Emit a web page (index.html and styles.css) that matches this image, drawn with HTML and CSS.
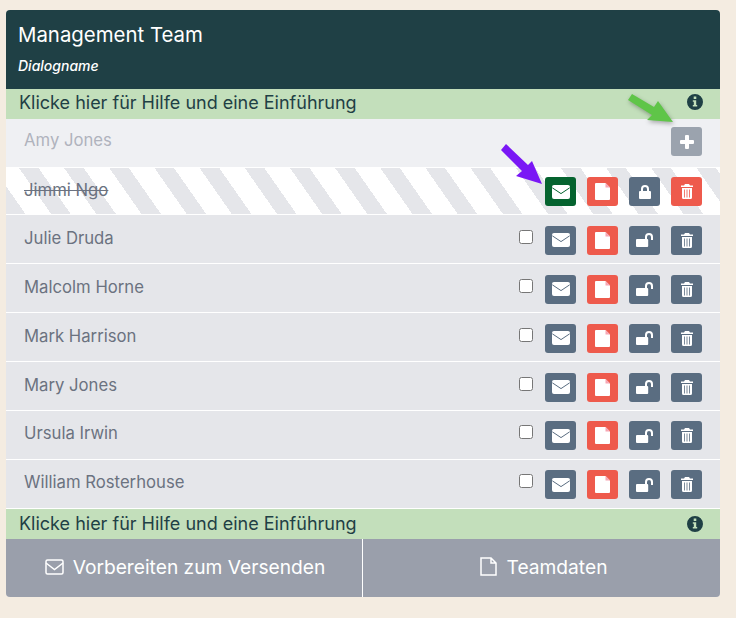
FILE: index.html
```html
<!DOCTYPE html>
<html>
<head>
    <meta charset="utf-8">
    <link rel="stylesheet" href="styles.css">
    <title>Management Team</title>
</head>
<body>
    <svg class="icon-defs" width="0" height="0">
        <symbol id="i-mail" viewBox="0 0 18 14">
            <rect width="18" height="14" rx="2" fill="white"/>
            <path d="M.3 2.800 9 8.600 17.700 2.800" fill="none" stroke="currentColor" stroke-width="1"/>
        </symbol>
        <symbol id="i-file" viewBox="0 0 15 17">
            <path d="M1 0h9.500L15 4.500V16a1 1 0 0 1-1 1H1a1 1 0 0 1-1-1V1a1 1 0 0 1 1-1z" fill="white"/>
            <path d="M10.500 0 15 4.500H10.500z" fill="#f7a6b4"/>
        </symbol>
        <symbol id="i-lock" viewBox="0 0 12 14">
            <path d="M2 6V4a4 4 0 0 1 8 0v2h1a1 1 0 0 1 1 1v6a1 1 0 0 1-1 1H1a1 1 0 0 1-1-1V7a1 1 0 0 1 1-1zm2 0h4V4a2 2 0 0 0-4 0z"/>
        </symbol>
        <symbol id="i-unlock" viewBox="0 0 17 14">
            <path d="M1 6h8V4a4 4 0 0 1 8 0v3h-2V4a2 2 0 0 0-4 0v2h.2a1 1 0 0 1 1 1v6a1 1 0 0 1-1 1H1a1 1 0 0 1-1-1V7a1 1 0 0 1 1-1z"/>
        </symbol>
        <symbol id="i-trash" viewBox="0 0 12 15">
            <path d="M4 0h4l1 1.500h3V3H0V1.500h3zM1 4h10v9.500A1.500 1.500 0 0 1 9.500 15h-7A1.500 1.500 0 0 1 1 13.500zm2 1.600v7.800h.8V5.600zm2.600 0v7.800h.8V5.600zm2.600 0v7.800h.8V5.600z" fill-rule="evenodd"/>
        </symbol>
        <symbol id="i-plus" viewBox="0 0 14 14">
            <path d="M5 1a1 1 0 0 1 1-1h2a1 1 0 0 1 1 1v4h4a1 1 0 0 1 1 1v2a1 1 0 0 1-1 1H9v4a1 1 0 0 1-1 1H6a1 1 0 0 1-1-1V9H1a1 1 0 0 1-1-1V6a1 1 0 0 1 1-1h4z"/>
        </symbol>
        <symbol id="i-info" viewBox="0 0 16 16">
            <path fill-rule="evenodd" d="M8 0a8 8 0 1 1 0 16A8 8 0 0 1 8 0zM6.700 2.600v2.500h2.600V2.600zM5.800 6.300v1.500h1v3.300h-1v1.500h4.400v-1.500h-1V6.300z"/>
        </symbol>
    </svg>

    <div class="card">
        <div class="head">
            <h1>Management Team</h1>
            <p>Dialogname</p>
        </div>

        <div class="help help-top">
            <span>Klicke hier für Hilfe und eine Einführung</span>
            <svg class="info"><use href="#i-info"/></svg>
        </div>

        <div class="row row-add">
            <span class="name">Amy Jones</span>
            <div class="actions">
                <button class="btn btn-add"><svg class="ic-plus"><use href="#i-plus"/></svg></button>
            </div>
        </div>

        <div class="row row-off">
            <span class="name">Jimmi Ngo</span>
            <div class="actions">
                <button class="btn btn-green"><svg class="ic-mail"><use href="#i-mail"/></svg></button>
                <button class="btn btn-red"><svg class="ic-file"><use href="#i-file"/></svg></button>
                <button class="btn"><svg class="ic-lock"><use href="#i-lock"/></svg></button>
                <button class="btn btn-red"><svg class="ic-trash"><use href="#i-trash"/></svg></button>
            </div>
        </div>

        <div class="row">
            <span class="name">Julie Druda</span>
            <div class="actions">
                <input type="checkbox">
                <button class="btn"><svg class="ic-mail"><use href="#i-mail"/></svg></button>
                <button class="btn btn-red"><svg class="ic-file"><use href="#i-file"/></svg></button>
                <button class="btn"><svg class="ic-unlock"><use href="#i-unlock"/></svg></button>
                <button class="btn"><svg class="ic-trash"><use href="#i-trash"/></svg></button>
            </div>
        </div>
        <div class="row">
            <span class="name">Malcolm Horne</span>
            <div class="actions">
                <input type="checkbox">
                <button class="btn"><svg class="ic-mail"><use href="#i-mail"/></svg></button>
                <button class="btn btn-red"><svg class="ic-file"><use href="#i-file"/></svg></button>
                <button class="btn"><svg class="ic-unlock"><use href="#i-unlock"/></svg></button>
                <button class="btn"><svg class="ic-trash"><use href="#i-trash"/></svg></button>
            </div>
        </div>
        <div class="row">
            <span class="name">Mark Harrison</span>
            <div class="actions">
                <input type="checkbox">
                <button class="btn"><svg class="ic-mail"><use href="#i-mail"/></svg></button>
                <button class="btn btn-red"><svg class="ic-file"><use href="#i-file"/></svg></button>
                <button class="btn"><svg class="ic-unlock"><use href="#i-unlock"/></svg></button>
                <button class="btn"><svg class="ic-trash"><use href="#i-trash"/></svg></button>
            </div>
        </div>
        <div class="row">
            <span class="name">Mary Jones</span>
            <div class="actions">
                <input type="checkbox">
                <button class="btn"><svg class="ic-mail"><use href="#i-mail"/></svg></button>
                <button class="btn btn-red"><svg class="ic-file"><use href="#i-file"/></svg></button>
                <button class="btn"><svg class="ic-unlock"><use href="#i-unlock"/></svg></button>
                <button class="btn"><svg class="ic-trash"><use href="#i-trash"/></svg></button>
            </div>
        </div>
        <div class="row">
            <span class="name">Ursula Irwin</span>
            <div class="actions">
                <input type="checkbox">
                <button class="btn"><svg class="ic-mail"><use href="#i-mail"/></svg></button>
                <button class="btn btn-red"><svg class="ic-file"><use href="#i-file"/></svg></button>
                <button class="btn"><svg class="ic-unlock"><use href="#i-unlock"/></svg></button>
                <button class="btn"><svg class="ic-trash"><use href="#i-trash"/></svg></button>
            </div>
        </div>
        <div class="row">
            <span class="name">William Rosterhouse</span>
            <div class="actions">
                <input type="checkbox">
                <button class="btn"><svg class="ic-mail"><use href="#i-mail"/></svg></button>
                <button class="btn btn-red"><svg class="ic-file"><use href="#i-file"/></svg></button>
                <button class="btn"><svg class="ic-unlock"><use href="#i-unlock"/></svg></button>
                <button class="btn"><svg class="ic-trash"><use href="#i-trash"/></svg></button>
            </div>
        </div>

        <div class="help help-bottom">
            <span>Klicke hier für Hilfe und eine Einführung</span>
            <svg class="info"><use href="#i-info"/></svg>
        </div>

        <div class="foot">
            <a class="foot-btn foot-send">
                <svg class="foot-ic" width="19" height="16" viewBox="0 0 19 16"><rect x="1" y="1" width="17" height="14" rx="1.500"/><path d="M1 4 9.500 10.500 18 4"/></svg>
                Vorbereiten zum Versenden
            </a>
            <a class="foot-btn foot-data">
                <svg class="foot-ic" width="17" height="19" viewBox="0 0 17 19"><path d="M1 1h10l5 5v12H1zM11 1v5h5"/></svg>
                Teamdaten
            </a>
        </div>
    </div>

    <!-- annotation arrows -->
    <svg class="arrow arrow-green" width="50" height="34" viewBox="0 0 50 34">
        <path d="M2 8 6 2 28 15 32 9 47 30 21 28 26 23z"/>
    </svg>
    <svg class="arrow arrow-purple" width="44" height="44" viewBox="0 0 44 44">
        <path d="M1 7 6 1 28 22 32 18 42 41 16 33 22 28z"/>
    </svg>
</body>
</html>
```

FILE: styles.css
```css
body {
    margin: 0;
    padding: 10px 16px 21px 6px;
    background: #f4ece1;
    font-family: Inter, "Noto Sans", sans-serif;
    color: #6b7280;
}

.icon-defs {
    position: absolute;
}

.card {
    display: flex;
    flex-direction: column;
    border-radius: 4px;
    overflow: hidden;
    background: #e5e6ea;
}

.head {
    height: 79px;
    box-sizing: border-box;
    padding: 13px 12px 0;
    background: #1f4045;
    color: white;
}

.head h1 {
    margin: 0;
    font-size: 20.4px;
    font-weight: 400;
    line-height: 24px;
}

.head p {
    margin: 9px 0 0;
    font-size: 14px;
    font-style: italic;
    font-weight: 500;
    line-height: 20px;
}

.help {
    display: flex;
    align-items: center;
    justify-content: space-between;
    height: 30px;
    box-sizing: border-box;
    padding: 0 17px 0 13px;
    background: #c3dfbb;
    color: #1f4045;
    font-size: 18px;
}

.help-top {
    padding-bottom: 4px;
}

.info {
    width: 16px;
    height: 16px;
    fill: #1f4045;
}

.row {
    display: flex;
    align-items: center;
    justify-content: space-between;
    height: 48.9px;
    box-sizing: border-box;
    padding: 0 18px;
    border-bottom: 1px solid white;
    font-size: 16.7px;
}

.name {
    margin-top: -3px;
}

.row-add {
    height: 47.5px;
    background: #eff0f3;
    border-bottom: none;
    color: #b0b3bd;
}

.row-add .name {
    margin-top: -5px;
}

.row-off {
    background: repeating-linear-gradient(55deg, #e5e6ea 0 16px, white 16px 37px);
    border-top: 1px solid white;
}

.row-off .name {
    margin-top: -2px;
    text-decoration: line-through;
}

.actions {
    display: flex;
    align-items: center;
    gap: 11px;
    padding-top: 2px;
}

.actions input {
    width: 14px;
    height: 14px;
    margin: -7px 1px 0 0;
}

.btn {
    display: flex;
    align-items: center;
    justify-content: center;
    width: 31px;
    height: 29px;
    padding: 0;
    border: none;
    border-radius: 3px;
    background: #5a6d81;
    color: #5a6d81;
    fill: white;
}

.btn-red {
    background: #ee5a4c;
    color: #ee5a4c;
}

.btn-green {
    background: #05632f;
    color: #05632f;
}

.btn-add {
    margin-top: -4px;
    background: #9ba3ae;
}

.ic-mail {
    width: 18px;
    height: 14px;
}

.ic-file {
    width: 15px;
    height: 17px;
}

.ic-lock {
    width: 12px;
    height: 14px;
}

.ic-unlock {
    width: 17px;
    height: 14px;
}

.ic-trash {
    width: 12px;
    height: 15px;
}

.ic-plus {
    width: 14px;
    height: 14px;
}

.foot {
    display: flex;
    height: 58px;
    background: #9a9fab;
}

.foot-btn {
    display: flex;
    align-items: center;
    justify-content: center;
    box-sizing: border-box;
    padding-bottom: 2px;
    color: white;
    font-size: 19.2px;
}

.foot-send {
    width: 356px;
    gap: 9px;
    padding-left: 2px;
}

.foot-data {
    flex: 1;
    gap: 10px;
    padding-left: 4px;
    border-left: 1px solid white;
}

.foot-ic {
    fill: none;
    stroke: white;
    stroke-width: 1.5;
}

.arrow {
    position: absolute;
}

.arrow-green {
    left: 626px;
    top: 92px;
    fill: #5fc548;
    filter: drop-shadow(1px 2px 2px rgba(0, 0, 0, 0.3));
}

.arrow-purple {
    left: 500px;
    top: 143px;
    fill: #7a17f5;
}
```
